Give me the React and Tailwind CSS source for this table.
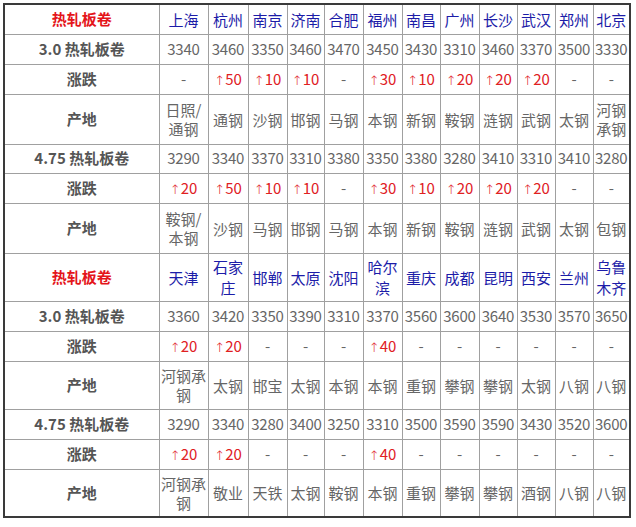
import React from 'react'

const widths = [155, 49, 40, 39, 37, 39, 39, 38, 39, 38, 38, 38, 37]

const block1 = {
    cities: ['上海', '杭州', '南京', '济南', '合肥', '福州', '南昌', '广州', '长沙', '武汉', '郑州', '北京'],
    headH: 30,
    rows: [
        { label: '3.0 热轧板卷', prices: [3340, 3460, 3350, 3460, 3470, 3450, 3430, 3310, 3460, 3370, 3500, 3330] },
        { label: '涨跌', change: ['-', '50', '10', '10', '-', '30', '10', '20', '20', '20', '-', '-'] },
        { label: '产地', origin: [['日照/', '通钢'], '通钢', '沙钢', '邯钢', '马钢', '本钢', '新钢', '鞍钢', '涟钢', '武钢', '太钢', ['河钢', '承钢']], h: 50 },
        { label: '4.75 热轧板卷', prices: [3290, 3340, 3370, 3310, 3380, 3350, 3380, 3280, 3410, 3310, 3410, 3280], h: 29 },
        { label: '涨跌', change: ['20', '50', '10', '10', '-', '30', '10', '20', '20', '20', '-', '-'] },
        { label: '产地', origin: [['鞍钢/', '本钢'], '沙钢', '马钢', '邯钢', '马钢', '本钢', '新钢', '鞍钢', '涟钢', '武钢', '太钢', '包钢'], h: 50 },
    ],
}

const block2 = {
    cities: ['天津', ['石家', '庄'], '邯郸', '太原', '沈阳', ['哈尔', '滨'], '重庆', '成都', '昆明', '西安', '兰州', ['乌鲁', '木齐']],
    headH: 48,
    rows: [
        { label: '3.0 热轧板卷', prices: [3360, 3420, 3350, 3390, 3310, 3370, 3560, 3600, 3640, 3530, 3570, 3650] },
        { label: '涨跌', change: ['20', '20', '-', '-', '-', '40', '-', '-', '-', '-', '-', '-'] },
        { label: '产地', origin: [['河钢承', '钢'], '太钢', '邯宝', '太钢', '本钢', '本钢', '重钢', '攀钢', '攀钢', '太钢', '八钢', '八钢'], h: 48 },
        { label: '4.75 热轧板卷', prices: [3290, 3340, 3280, 3400, 3250, 3310, 3500, 3590, 3590, 3430, 3520, 3600], h: 30 },
        { label: '涨跌', change: ['20', '20', '-', '-', '-', '40', '-', '-', '-', '-', '-', '-'] },
        { label: '产地', origin: [['河钢承', '钢'], '敬业', '天铁', '太钢', '鞍钢', '本钢', '重钢', '攀钢', '攀钢', '酒钢', '八钢', '八钢'], h: 48 },
    ],
}

function Lines({ v }) {
    if (Array.isArray(v)) {
        return <>{v[0]}<br />{v[1]}</>
    }
    return v
}

const cell = "border border-[#a0a0a0] p-0 text-center align-middle whitespace-nowrap"

function Block({ data }) {
    return (
        <>
            <tr style={{ height: data.headH }}>
                <td className={cell + " text-[#e4151b] font-bold"}>热轧板卷</td>
                {data.cities.map((c, i) => (
                    <td key={i} className={cell + " text-[#1c1ca8] leading-[21px]"}><Lines v={c} /></td>
                ))}
            </tr>
            {data.rows.map((r, ri) => (
                <tr key={ri} style={{ height: r.h || 30 }}>
                    <td className={cell + " font-bold text-[#555]"}>{r.label}</td>
                    {r.prices && r.prices.map((p, i) => (
                        <td key={i} className={cell + " text-[#666] tracking-[-0.2px]"}>{p}</td>
                    ))}
                    {r.change && r.change.map((c, i) => (
                        <td key={i} className={cell + (c === '-' ? " text-[#666]" : " text-[#e0201f]")}>
                            {c === '-' ? '-' : (
                                <><span className="font-['DejaVu_Sans'] text-[13px] font-light">↑</span>{c}</>
                            )}
                        </td>
                    ))}
                    {r.origin && r.origin.map((o, i) => (
                        <td key={i} className={cell + " text-[#666] leading-[19px]"}><Lines v={o} /></td>
                    ))}
                </tr>
            ))}
        </>
    )
}

export default function App() {
    return (
        <div className="w-[636px] h-[527px] bg-white pt-[3px] pl-[3px]" style={{ fontFamily: '"Noto Sans CJK SC", "Noto Sans", sans-serif' }}>
            <table className="table-fixed border-collapse border-2 border-[#3a3a3a] text-[15px] w-[626px]">
                <colgroup>
                    {widths.map((w, i) => <col key={i} style={{ width: w }} />)}
                </colgroup>
                <tbody>
                    <Block data={block1} />
                    <Block data={block2} />
                </tbody>
            </table>
        </div>
    )
}
